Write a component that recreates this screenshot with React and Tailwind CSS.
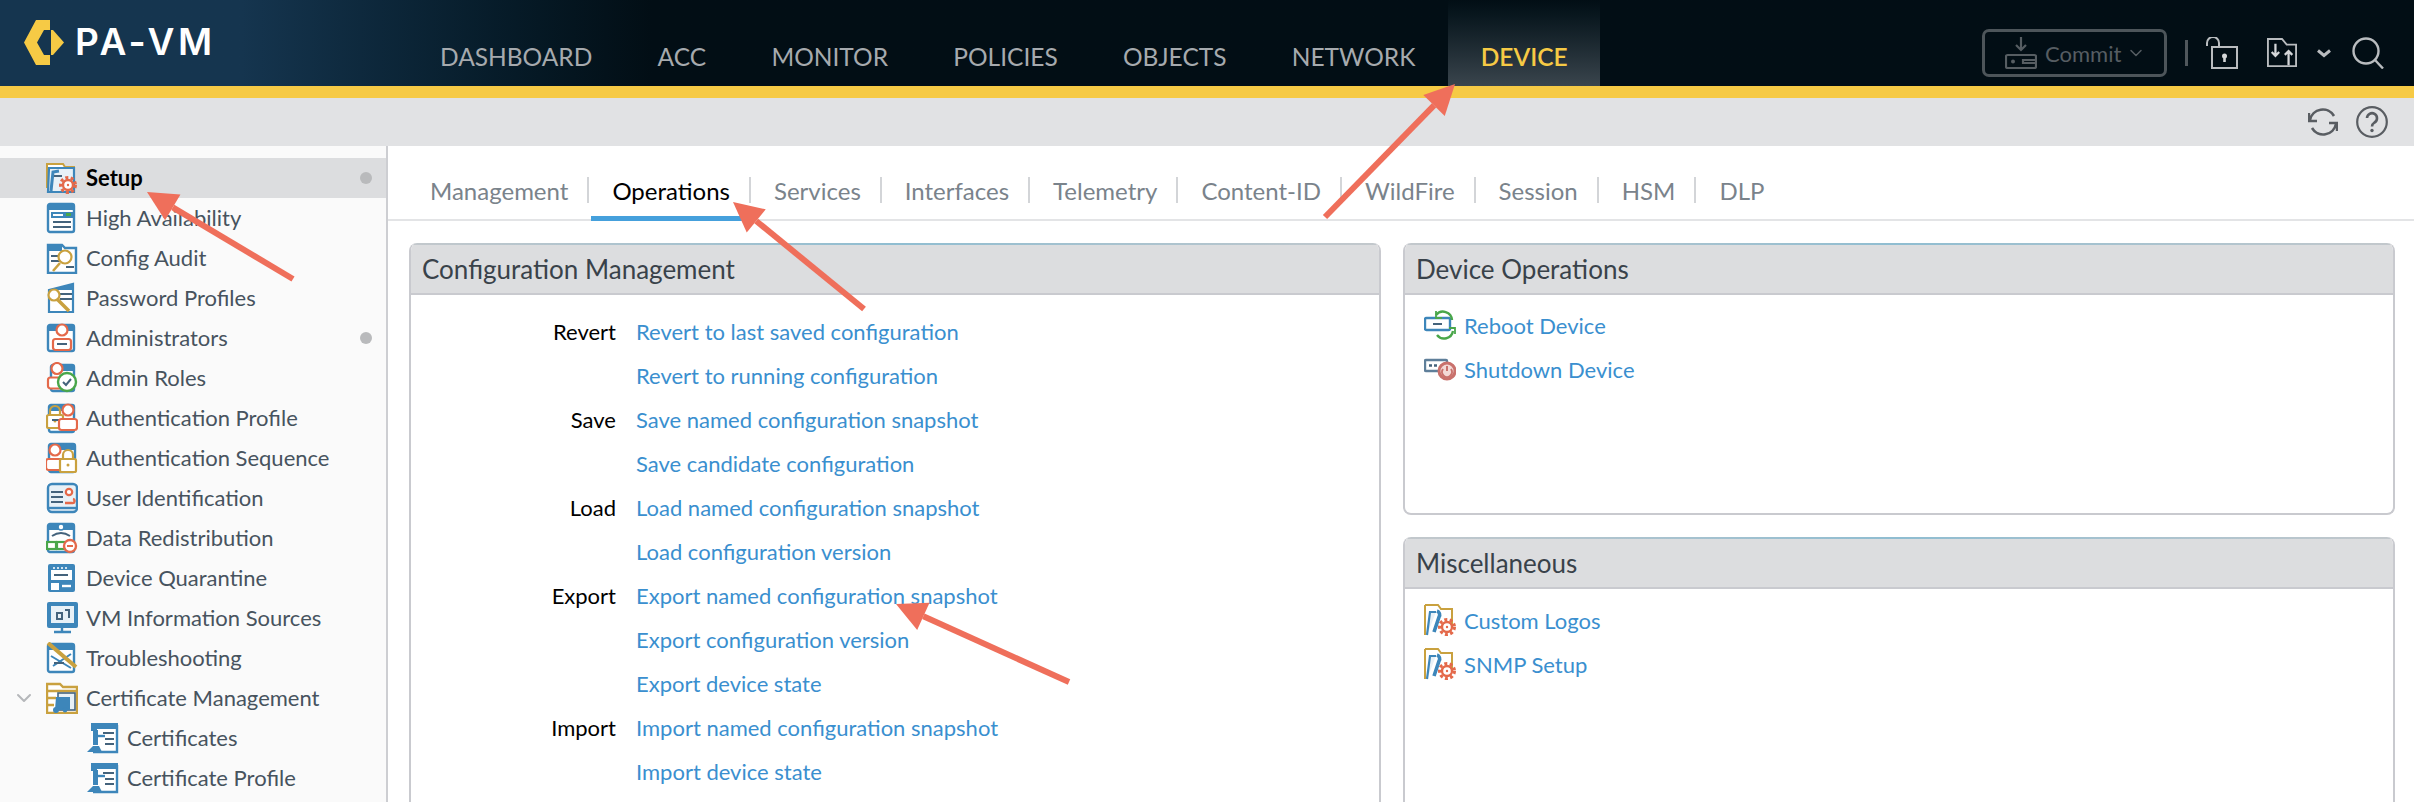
import { ChevronDown } from "lucide-react";

const blue = "#3d86ba";
const orange = "#e4694a";
const gold = "#c9a13f";
const green = "#49a64a";

const navItems = [
  "DASHBOARD",
  "ACC",
  "MONITOR",
  "POLICIES",
  "OBJECTS",
  "NETWORK",
];

const tabs = [
  "Management",
  "Operations",
  "Services",
  "Interfaces",
  "Telemetry",
  "Content-ID",
  "WildFire",
  "Session",
  "HSM",
  "DLP",
];

const sideItems = [
  { label: "Setup", icon: "setup", active: true, dot: true },
  { label: "High Availability", icon: "ha" },
  { label: "Config Audit", icon: "audit" },
  { label: "Password Profiles", icon: "password" },
  { label: "Administrators", icon: "admin", dot: true },
  { label: "Admin Roles", icon: "roles" },
  { label: "Authentication Profile", icon: "authProfile" },
  { label: "Authentication Sequence", icon: "authSeq" },
  { label: "User Identification", icon: "userId" },
  { label: "Data Redistribution", icon: "redist" },
  { label: "Device Quarantine", icon: "quarantine" },
  { label: "VM Information Sources", icon: "vm" },
  { label: "Troubleshooting", icon: "trouble" },
  { label: "Certificate Management", icon: "certMgmt", open: true },
  { label: "Certificates", icon: "cert", child: true },
  { label: "Certificate Profile", icon: "cert", child: true },
  // next row only peeks in at the bottom of the window
  { label: "", icon: "cert", child: true },
];

const configRows = [
  ["Revert", "Revert to last saved configuration"],
  ["", "Revert to running configuration"],
  ["Save", "Save named configuration snapshot"],
  ["", "Save candidate configuration"],
  ["Load", "Load named configuration snapshot"],
  ["", "Load configuration version"],
  ["Export", "Export named configuration snapshot"],
  ["", "Export configuration version"],
  ["", "Export device state"],
  ["Import", "Import named configuration snapshot"],
  ["", "Import device state"],
];

// small pieces the tree icons are built from
function Win({ x = 2, y = 3, w = 26, h = 26 }) {
  return (
    <g>
      <rect x={x} y={y} width={w} height={h} rx="2" fill="#fff" stroke={blue} strokeWidth="2.4" />
      <rect x={x} y={y} width={w} height="6" fill={blue} />
    </g>
  );
}

function Lines({ x = 7, y = 13, w = 14, n = 3 }) {
  const rows = [];
  for (let i = 0; i < n; i++) {
    rows.push(
      <path key={i} d={`M${x} ${y + i * 5}h${w}`} stroke="#44637c" strokeWidth="2" />
    );
  }
  return <g>{rows}</g>;
}

function Gear({ cx = 22, cy = 22, r = 6 }) {
  return (
    <g fill="none" stroke={orange}>
      <circle cx={cx} cy={cy} r={r + 1.5} strokeWidth="3" strokeDasharray="3 2.4" />
      <circle cx={cx} cy={cy} r={r - 1} fill="#fff" strokeWidth="2.4" />
      <circle cx={cx} cy={cy} r="1.2" fill={orange} stroke="none" />
    </g>
  );
}

function Person({ cx = 16, cy = 8, color = orange }) {
  return (
    <g fill="#fff" stroke={color} strokeWidth="2.2">
      <circle cx={cx} cy={cy} r="5.5" />
      <rect x={cx - 9} y={cy + 9} width="18" height="11" rx="2.5" />
    </g>
  );
}

function Lock({ x = 3, y = 14 }) {
  return (
    <g fill="#fff" stroke={gold} strokeWidth="2.2">
      <path d={`M${x + 3} ${y}v-4a5 5 0 0 1 10 0v4`} fill="none" />
      <rect x={x} y={y} width="16" height="13" rx="1.5" />
      <circle cx={x + 8} cy={y + 6} r="1.5" fill={gold} stroke="none" />
    </g>
  );
}

function TreeIcon({ name, className = "w-[32px] h-[32px] shrink-0" }) {
  let body = null;
  if (name === "setup") {
    body = (
      <g>
        <path d="M1 2h16l2 3h9v20H1z" fill="#fff" stroke={gold} strokeWidth="2" />
        <path d="M3 6h25v24H2z" fill="#e8f1f7" stroke={blue} strokeWidth="2.2" />
        <path d="M13 9l-6 1-2 19" fill="none" stroke={blue} strokeWidth="3" />
        <path d="M8 14h8" stroke="#44637c" strokeWidth="2" />
        <Gear cx={22} cy={23} r={6} />
      </g>
    );
  } else if (name === "ha") {
    body = (
      <g>
        <Win y={2} h={28} />
        <rect x={5} y={10} width={22} height={6} fill={blue} />
        <path d="M7 13h10" stroke="#fff" strokeWidth="2" />
        <path d="M20 12.5h5" stroke={green} strokeWidth="3" />
        <path d="M7 20h18M7 25h18" stroke="#44637c" strokeWidth="2" />
      </g>
    );
  } else if (name === "audit") {
    body = (
      <g>
        <path d="M2 3h14l3 3h11v25H2z" fill="#fff" stroke={blue} strokeWidth="2.4" />
        <rect x={2} y={3} width={14} height={6} fill={blue} />
        <Lines x={5} y={14} w={10} n={2} />
        <circle cx={19} cy={15} r={6.5} fill="#fff" stroke={gold} strokeWidth="2.2" />
        <path d="M14 21l-7 8" stroke={gold} strokeWidth="2.6" />
        <path d="M20 25h8" stroke="#44637c" strokeWidth="2" />
      </g>
    );
  } else if (name === "password") {
    body = (
      <g>
        <path d="M3 8l24-6v28H3z" fill="#fff" stroke={blue} strokeWidth="2.2" />
        <path d="M8 7l19-5v6H8z" fill={blue} />
        <path d="M14 12h12M14 17h12" stroke="#44637c" strokeWidth="2" />
        <circle cx={8} cy={13} r={5.5} fill="#fff" stroke={gold} strokeWidth="2.2" />
        <path d="M11 17l12 12" stroke={gold} strokeWidth="3.6" />
      </g>
    );
  } else if (name === "admin") {
    body = (
      <g>
        <Win y={3} h={26} />
        <Person cx={16} cy={8} />
        <path d="M11 22h10" stroke="#44637c" strokeWidth="2" />
      </g>
    );
  } else if (name === "roles") {
    body = (
      <g>
        <Win x={5} y={3} w={23} h={26} />
        <Person cx={11} cy={6.5} />
        <circle cx={21} cy={20} r={9} fill="#fff" stroke={green} strokeWidth="2.4" />
        <path d="M17 20l3 3 5-6" fill="none" stroke="#44637c" strokeWidth="2" />
      </g>
    );
  } else if (name === "authProfile") {
    body = (
      <g>
        <Win x={3} y={3} w={25} h={27} />
        <Lock x={1} y={13} />
        <path d="M6 18h7" stroke="#44637c" strokeWidth="2" />
        <Person cx={22} cy={8} />
      </g>
    );
  } else if (name === "authSeq") {
    body = (
      <g>
        <Win x={3} y={2} w={26} h={28} />
        <path d="M16 1v3M22 1v3M27 1v3" stroke={blue} strokeWidth="2.4" />
        <Person cx={9} cy={8} />
        <Lock x={14} y={17} />
      </g>
    );
  } else if (name === "userId") {
    body = (
      <g>
        <rect x={2} y={2} width={29} height={28} rx={4} fill="#e8f1f7" stroke={blue} strokeWidth="2.4" />
        <Lines x={5} y={10} w={12} n={3} />
        <circle cx={23} cy={10} r={3.2} fill="#fff" stroke={orange} strokeWidth="2.2" />
        <path d="M19 21h7a2 2 0 0 0 1-4" fill="none" stroke={orange} strokeWidth="2.4" />
        <path d="M3 26h27" stroke={blue} strokeWidth="2.4" />
      </g>
    );
  } else if (name === "redist") {
    body = (
      <g>
        <Win y={2} h={28} />
        <circle cx={15} cy={5} r={3} fill="#fff" stroke={blue} strokeWidth="1.6" />
        <path d="M6 14q9-6 18 0" fill="none" stroke="#44637c" strokeWidth="2" />
        <rect x={1} y={20} width={9} height={7} fill="#fff" stroke={green} strokeWidth="2.2" />
        <rect x={11} y={20} width={9} height={7} fill="#fff" stroke={green} strokeWidth="2.2" />
        <circle cx={24} cy={24} r={6} fill="#fff" stroke={orange} strokeWidth="2.4" />
        <path d="M21 24h6" stroke={orange} strokeWidth="2" />
      </g>
    );
  } else if (name === "quarantine") {
    body = (
      <g>
        <rect x={2} y={2} width={27} height={28} rx={2} fill={blue} />
        <rect x={5} y={8} width={21} height={10} fill="#fff" />
        <path d="M7 6h2M11 6h2M15 6h2M19 6h2" stroke="#fff" strokeWidth="1.6" />
        <path d="M8 13h14" stroke="#44637c" strokeWidth="2" />
        <rect x={5} y={21} width={8} height={7} fill="#fff" />
        <path d="M16 24h9" stroke="#fff" strokeWidth="2.4" />
      </g>
    );
  } else if (name === "vm") {
    body = (
      <g>
        <rect x={1} y={0} width={31} height={26} rx={2} fill={blue} />
        <rect x={5} y={4} width={23} height={17} fill="#e8f1f7" />
        <path d="M11 11h5v6h-5zM19 8h4v8" fill="none" stroke="#44637c" strokeWidth="2" />
        <path d="M16 26v4M8 30h17" stroke={blue} strokeWidth="2.4" />
      </g>
    );
  } else if (name === "trouble") {
    body = (
      <g>
        <Win y={2} h={28} />
        <path d="M5 14l20 12M7 24l18-12" stroke={blue} strokeWidth="2" />
        <path d="M8 21h10" stroke="#44637c" strokeWidth="2" />
        <path d="M2 1l28 24" stroke={gold} strokeWidth="4" />
      </g>
    );
  } else if (name === "certMgmt") {
    body = (
      <g>
        <path d="M1 2h13l3 3h14v26H1z" fill="#fff" stroke={gold} strokeWidth="2.4" />
        <path d="M2 9h28M2 16h8M2 23h6" stroke={gold} strokeWidth="2.4" />
        <rect x={12} y={11} width={17} height={17} fill="#e8f1f7" stroke="#44637c" strokeWidth="1.6" />
        <path d="M10 15h14v13H9z" fill={blue} />
        <circle cx={10} cy={28} r={3} fill={blue} />
        <circle cx={19} cy={28} r={2.4} fill={blue} />
      </g>
    );
  } else if (name === "cert") {
    body = (
      <g>
        <path d="M4 2h27v28H4z" fill="#fff" />
        <path d="M4 1h27v6H10v2H4z" fill={blue} />
        <path d="M30 3v27H6" fill="none" stroke={blue} strokeWidth="2.4" />
        <path d="M6 8h5v15H6z" fill={blue} />
        <path d="M8 14h10" stroke={blue} strokeWidth="2.4" />
        <path d="M16 11h11M18 17h9M18 22h9" stroke="#44637c" strokeWidth="2" />
        <path d="M0 30l6-6h6l3 6z" fill={blue} />
      </g>
    );
  } else if (name === "reboot") {
    body = (
      <g>
        <rect x={1} y={9} width={25} height={12} rx={1.5} fill="#fff" stroke={blue} strokeWidth="2.4" />
        <path d="M12 6a9 9 0 0 1 16 5" fill="none" stroke={green} strokeWidth="2.4" />
        <path d="M29 22a9 9 0 0 1-16 4" fill="none" stroke={green} strokeWidth="2.4" />
        <path d="M12 2v7h6M31 25v-6h-6" fill="none" stroke={green} strokeWidth="1.8" />
        <path d="M9 15h9" stroke="#44637c" strokeWidth="2" />
      </g>
    );
  } else if (name === "shutdown") {
    body = (
      <g>
        <rect x={1} y={7} width={22} height={11} rx={1} fill="#fff" stroke="#5f7f9a" strokeWidth="2.4" />
        <path d="M5 12.500h3M10 12.500h3" stroke="#44637c" strokeWidth="2.4" />
        <circle cx={23} cy={18} r={8} fill="#f3d9d6" stroke="#c9716c" strokeWidth="3" />
        <path d="M19 16a5 5 0 1 0 8 0M23 13v5" fill="none" stroke="#c9716c" strokeWidth="2" />
      </g>
    );
  } else if (name === "tools") {
    body = (
      <g>
        <path d="M1 1h13l3 4h11v16" fill="none" stroke={gold} strokeWidth="2" />
        <path d="M1 1v30" stroke={gold} strokeWidth="2" />
        <path d="M3 31l3-23h6" fill="#e8f1f7" stroke={blue} strokeWidth="2.200" />
        <path d="M13 7a4 4 0 0 1 2 6l-5 15" fill="none" stroke={blue} strokeWidth="3.600" />
        <Gear cx={23} cy={23} r={6} />
      </g>
    );
  }
  return (
    <svg viewBox="0 0 32 32" className={className}>
      {body}
    </svg>
  );
}

function Logo() {
  return (
    <svg viewBox="0 0 40 45" className="w-[40px] h-[45px] shrink-0">
      <path d="M12 0h14v10h-6L13 22.500 20 35h6v10H12L0 22.500z" fill="#f6ca45" />
      <path d="M27 10h2l11 12.500L29 35h-2z" fill="#f6ca45" />
    </svg>
  );
}

function TopIcons() {
  return (
    <div className="flex items-center">
      <button className="w-[185px] h-[48px] border-[3px] border-[#4d555a] rounded-[7px] flex items-center pl-[20px] text-[#565d62] text-[22px]">
        <svg viewBox="0 0 32 32" className="w-[32px] h-[32px] mr-[8px]" fill="none" stroke="#565d62" strokeWidth="2.200">
          <path d="M16 0v13M11 8l5 5 5-5" />
          <rect x="1" y="18" width="30" height="13" rx="1.500" />
          <circle cx="8" cy="24.500" r="2" fill="#565d62" stroke="none" />
          <path d="M31 23H18v3h13" />
        </svg>
        Commit
        <ChevronDown className="w-[20px] h-[20px] ml-[5px]" strokeWidth={1.8} />
      </button>
      <div className="w-[3px] h-[26px] bg-[#50575c] ml-[18px] mr-[18px]"></div>
      <svg viewBox="0 0 32 32" className="w-[32px] h-[32px]" fill="none" stroke="#b9bcbf" strokeWidth="2">
        <rect x="6" y="10" width="25" height="21" />
        <path d="M1 9V6a6 6 0 0 1 12 0v4" />
        <circle cx="18.500" cy="19" r="2.500" fill="#d4d6d8" stroke="none" />
        <path d="M18.500 20v5" strokeWidth="2.600" stroke="#d4d6d8" />
      </svg>
      <svg viewBox="0 0 32 32" className="w-[32px] h-[30px] ml-[28px]" fill="none" stroke="#b9bcbf" strokeWidth="2">
        <path d="M1 1h15l5 6h10v23H1z" />
        <path d="M9 6v13M5 15l4 4 4-4M23 29V14M19 18l4-4 4 4" strokeWidth="2.400" stroke="#d4d6d8" />
      </svg>
      <svg viewBox="0 0 14 9" className="w-[14px] h-[9px] ml-[19px]" fill="none" stroke="#b9bcbf" strokeWidth="3">
        <path d="M1 1.500l6 5 6-5" />
      </svg>
      <svg viewBox="0 0 32 32" className="w-[32px] h-[32px] ml-[21px]" fill="none" stroke="#b9bcbf" strokeWidth="2.400">
        <circle cx="14" cy="14" r="12.500" />
        <path d="M23 23l8 8.500" />
      </svg>
    </div>
  );
}

function TopBar() {
  return (
    <div className="h-[86px] flex bg-linear-to-r from-[#15354f] from-10% to-[#020e15] to-[27%]">
      <div className="w-[407.400px] shrink-0 flex items-start pl-[24px] pt-[20px]">
        <Logo />
        <span className="ml-[11px] text-white text-[37px] leading-[44px] font-semibold tracking-[3.500px] font-['Inter',sans-serif]">
          PA-VM
        </span>
      </div>
      <div className="flex h-full text-[24.500px] text-[#a6aaae]">
        {navItems.map((item) => (
          <div key={item} className="px-[32.650px] pt-[39px] leading-[36px]">
            {item}
          </div>
        ))}
        <div className="px-[32.650px] pt-[39px] leading-[36px] text-[#f6ca45] font-semibold bg-linear-to-b from-[#020e15] to-[#3a454d]">
          DEVICE
        </div>
      </div>
      <div className="ml-auto pr-[30px] pt-[29px] h-[77px]">
        <TopIcons />
      </div>
    </div>
  );
}

function SubBar() {
  return (
    <div className="h-[48px] bg-[#e1e2e4] flex items-center justify-end pr-[26px]">
      <svg viewBox="0 0 30 30" className="w-[30px] h-[30px]" fill="none" stroke="#595d62" strokeWidth="2.600">
        <path d="M2 13A13 13 0 0 1 26 9" />
        <path d="M28 17A13 13 0 0 1 4 21" />
        <path d="M1 6v8h8M29 24v-8h-8" strokeWidth="2.400" />
      </svg>
      <svg viewBox="0 0 32 32" className="w-[32px] h-[32px] ml-[18px]" fill="none" stroke="#595d62" strokeWidth="2.200">
        <circle cx="16" cy="16" r="14.800" />
        <path d="M11 12a5 5 0 1 1 7.500 4.500c-1.800 1.200-2.500 2-2.500 4" strokeWidth="2.600" />
        <circle cx="16" cy="24.500" r="1.700" fill="#595d62" stroke="none" />
      </svg>
    </div>
  );
}

function Sidebar() {
  return (
    <div className="w-[388px] shrink-0 h-full overflow-hidden bg-[#fafafa] border-r-2 border-[#cdced2] pt-[12px] text-[22px] text-[#47535e]">
      {sideItems.map((item, index) => (
        <div
          key={index}
          className={`h-[40px] flex items-center pr-[14px] ${
            item.active ? "bg-[#dcdddf] font-bold text-black" : ""
          } ${item.child ? "pl-[87px]" : "pl-[46px]"}`}
        >
          {item.open && (
            <ChevronDown
              className="w-[24px] h-[24px] -ml-[34px] mr-[10px] text-[#b5b7ba]"
              strokeWidth={2}
            />
          )}
          <TreeIcon name={item.icon} />
          {item.label && (
            <span className="ml-[8px] pb-[2px] whitespace-nowrap">{item.label}</span>
          )}
          {item.dot && (
            <span className="ml-auto w-[12px] h-[12px] rounded-full bg-[#b9babc]"></span>
          )}
        </div>
      ))}
    </div>
  );
}

function Tabs() {
  return (
    <div className="h-[75px] border-b-2 border-[#e3e4e6] flex items-start pl-[19px] pt-[31px] text-[24px] text-[#7a838b]">
      {tabs.map((tab, index) => (
        <div
          key={tab}
          className={`relative h-[42px] pl-[23px] pr-[21px] flex items-center leading-none pb-[14px] ${
            tab === "Operations" ? "text-black" : ""
          }`}
        >
          {tab}
          {index < tabs.length - 1 && (
            <span className="absolute right-0 top-0 w-[2px] h-[26px] bg-[#d3d5d8]"></span>
          )}
          {tab === "Operations" && (
            <span className="absolute left-[2px] right-0 bottom-[-2px] h-[5px] bg-[#45a0dc]"></span>
          )}
        </div>
      ))}
    </div>
  );
}

function Panel({ title, className, children }) {
  return (
    <div
      className={`relative rounded-t-[8px] overflow-hidden bg-white border-x-2 border-[#c9cacf] flex flex-col ${className}`}
    >
      <div className="h-[2px] shrink-0 bg-linear-to-r from-[#c3c8cc] via-[#8fbdd1] to-[#c3c8cc]"></div>
      <div className="h-[50px] shrink-0 bg-[#dcdddf] border-b-2 border-[#c9cacf] flex items-center pl-[11px] text-[26px] text-[#39424a]">
        {title}
      </div>
      {children}
    </div>
  );
}

function IconLink({ icon, label }) {
  return (
    <div className="h-[44px] flex items-center text-[22px] text-[#3a8fcf]">
      <TreeIcon name={icon} />
      <span className="ml-[8px]">{label}</span>
    </div>
  );
}

function Arrow({ from, to }) {
  const dx = to[0] - from[0];
  const dy = to[1] - from[1];
  const len = Math.sqrt(dx * dx + dy * dy);
  const ux = dx / len;
  const uy = dy / len;
  const bx = to[0] - ux * 30;
  const by = to[1] - uy * 30;
  const head = [
    to,
    [bx - uy * 15, by + ux * 15],
    [bx + uy * 15, by - ux * 15],
  ];
  return (
    <g>
      <line x1={from[0]} y1={from[1]} x2={bx} y2={by} stroke="#ef6f5b" strokeWidth="6" />
      <polygon points={head.map((p) => p.join(",")).join(" ")} fill="#ef6f5b" />
    </g>
  );
}

export default function App() {
  return (
    <div className="relative w-[2414px] h-[802px] overflow-hidden bg-white flex flex-col font-['Lato','Open_Sans',sans-serif]">
      <TopBar />
      <div className="h-[12px] bg-[#f6ca45]"></div>
      <SubBar />

      <div className="flex-1 flex min-h-0">
        <Sidebar />

        <div className="flex-1 min-w-0 flex flex-col">
          <Tabs />

          <div className="flex-1 min-h-0 flex gap-[22px] pl-[21px] pr-[19px] pt-[22px]">
            <Panel title="Configuration Management" className="w-[972px] h-[600px]">
              <div className="pt-[14px] text-[22px]">
                {configRows.map((row) => (
                  <div key={row[1]} className="h-[44px] flex items-center">
                    <span className="w-[205px] text-right text-black">{row[0]}</span>
                    <span className="ml-[20px] text-[#3a8fcf]">{row[1]}</span>
                  </div>
                ))}
              </div>
            </Panel>

            <div className="flex-1 min-w-0 flex flex-col gap-[22px]">
              <Panel
                title="Device Operations"
                className="h-[272px] shrink-0 border-b-2 rounded-b-[8px]"
              >
                <div className="pl-[19px] pt-[8px]">
                  <IconLink icon="reboot" label="Reboot Device" />
                  <IconLink icon="shutdown" label="Shutdown Device" />
                </div>
              </Panel>

              <Panel title="Miscellaneous" className="h-[400px] shrink-0">
                <div className="pl-[19px] pt-[9px]">
                  <IconLink icon="tools" label="Custom Logos" />
                  <IconLink icon="tools" label="SNMP Setup" />
                </div>
              </Panel>
            </div>
          </div>
        </div>
      </div>

      {/* callout arrows drawn over the page */}
      <svg className="absolute left-0 top-0 w-[2414px] h-[802px] pointer-events-none" viewBox="0 0 2414 802">
        <Arrow from={[1325, 217]} to={[1455, 84]} />
        <Arrow from={[293, 279]} to={[147, 192]} />
        <Arrow from={[864, 309]} to={[733, 202]} />
        <Arrow from={[1069, 682]} to={[896, 604]} />
      </svg>
    </div>
  );
}
